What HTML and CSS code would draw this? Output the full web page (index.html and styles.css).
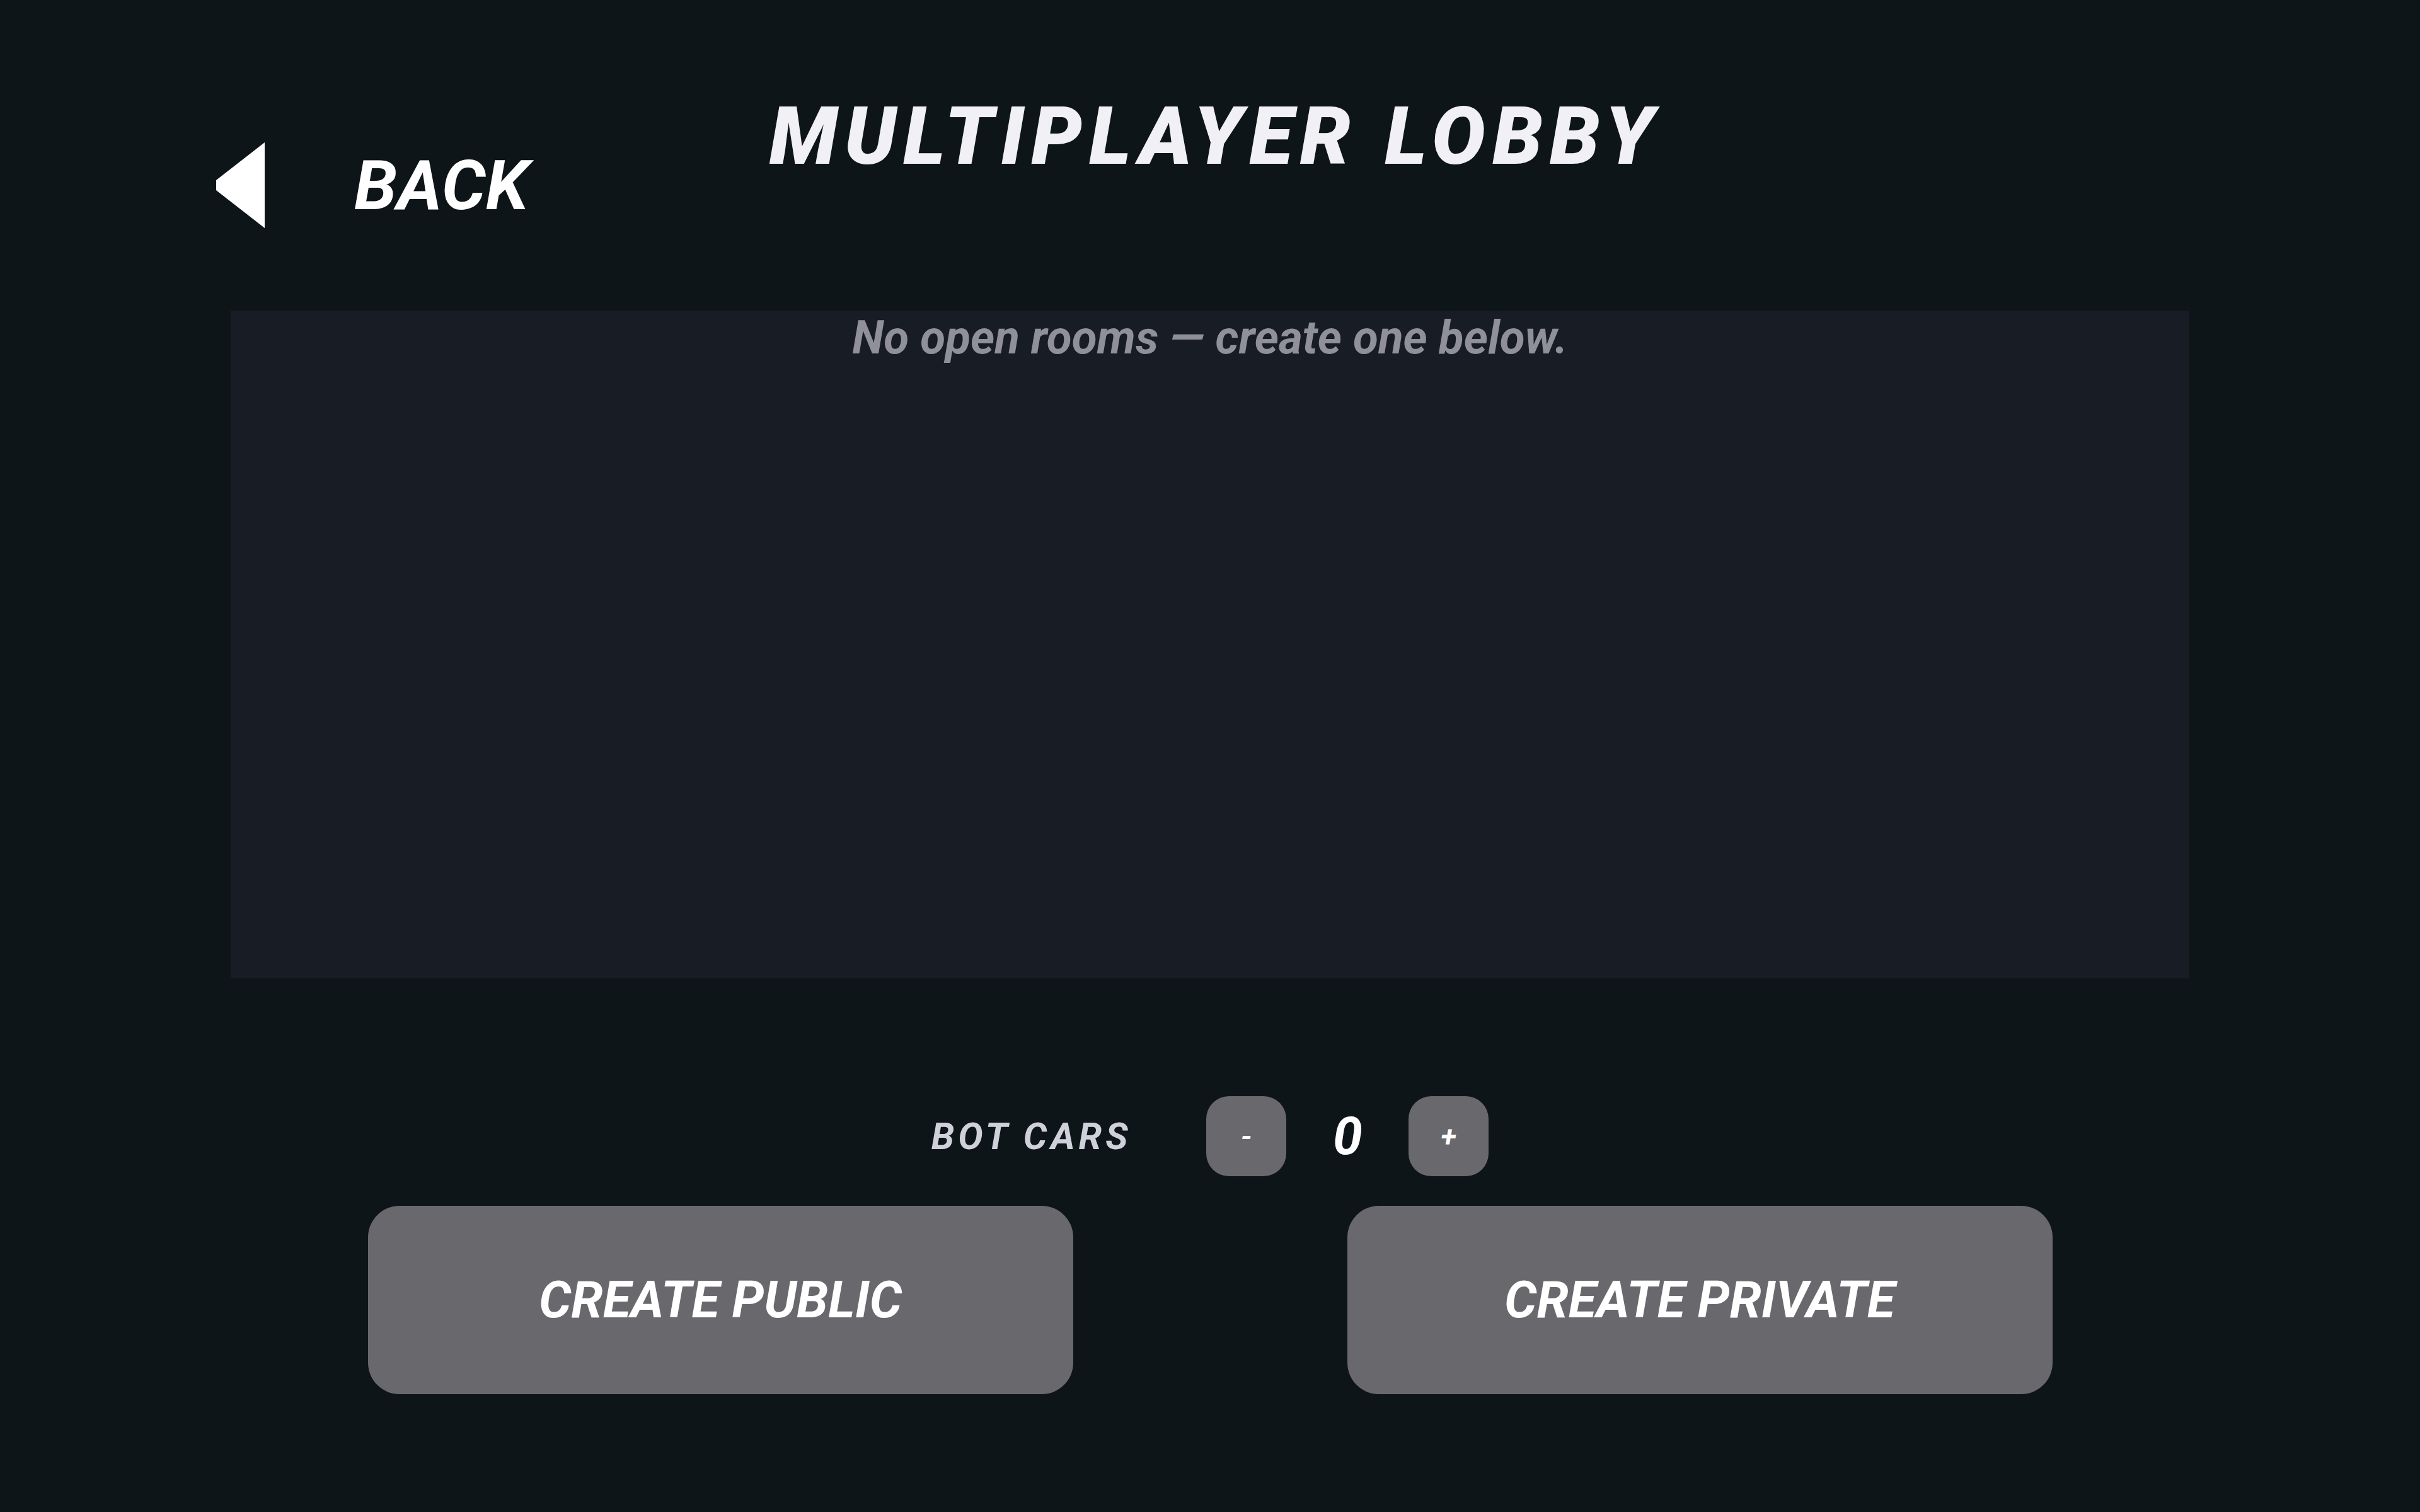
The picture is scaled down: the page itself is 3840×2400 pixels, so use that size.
FILE: index.html
```html
<!DOCTYPE html>
<html lang="en">
<head>
  <meta charset="UTF-8">
  <title>Multiplayer Lobby</title>
  <link rel="stylesheet" href="styles.css">
</head>
<body>
  <div class="top">
    <button class="back">
      <svg class="back-arrow" width="77" height="136" viewBox="0 0 77 136"><polygon points="77,0 0,60 0,76 77,136" fill="#ffffff"/></svg>
      <span>BACK</span>
    </button>
    <h1>MULTIPLAYER LOBBY</h1>
  </div>

  <div class="rooms">
    <p class="empty">No open rooms — create one below.</p>
  </div>

  <div class="bots">
    <span class="bots-label">BOT CARS</span>
    <button class="step">-</button>
    <span class="bots-count">0</span>
    <button class="step">+</button>
  </div>

  <div class="create">
    <button class="create-btn">CREATE PUBLIC</button>
    <button class="create-btn">CREATE PRIVATE</button>
  </div>
</body>
</html>
```

FILE: styles.css
```css
body { margin: 0; height: 2400px; background: #0e1518; font-family: Roboto, "Liberation Sans", sans-serif; font-style: italic; font-weight: 700; overflow: hidden; }
button { font-family: inherit; font-style: inherit; font-weight: inherit; border: none; cursor: pointer; }

.top { display: grid; grid-template-columns: 1fr auto 1fr; align-items: start; padding-top: 142px; }
.back { justify-self: start; grid-column: 1; grid-row: 1; display: flex; align-items: center; gap: 142px; margin: 84px 0 0 343px; padding: 0; background: none; color: #fff; font-size: 110px; line-height: normal; }
.back-arrow { display: block; }
h1 { grid-column: 2; grid-row: 1; margin: 0 0 0 16px; font-size: 127px; line-height: normal; letter-spacing: 0.09em; color: #f1f0f5; font-weight: 900; }

.rooms { margin: 131px 366px 0; height: 1060px; background: #181c24; }
.empty { margin: 0; text-align: center; font-size: 73px; line-height: normal; font-weight: 700; color: #8f909a; }

.bots { display: flex; justify-content: center; align-items: center; margin-top: 187px; height: 127px; }
.bots-label { font-size: 59px; letter-spacing: 0.1em; color: #d0d0da; margin-right: 119px; }
.step { width: 127px; height: 127px; border-radius: 36px; background: #69686d; color: #fff; font-size: 46px; padding: 0; }
.bots-count { width: 194px; text-align: center; font-size: 84px; color: #fff; }

.create { display: flex; justify-content: center; gap: 435px; margin-top: 47px; }
.create-btn { width: 1119px; height: 299px; border-radius: 50px; background: #69686d; color: #fff; font-size: 81px; padding: 0; }
```
